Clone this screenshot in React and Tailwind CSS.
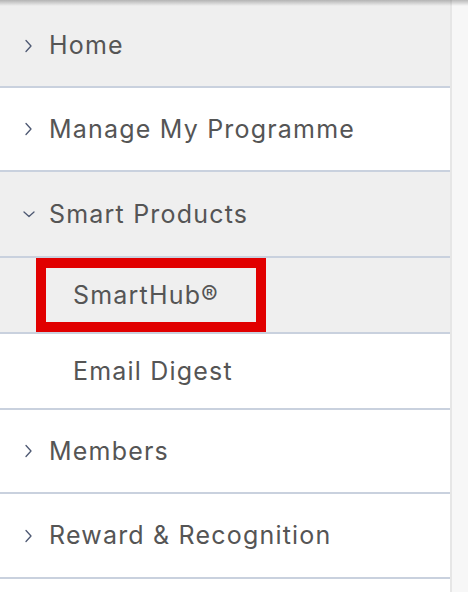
import React from 'react';

const Chevron = ({ open }) => (
  <svg width="14" height="14" viewBox="0 0 14 14" className="shrink-0" fill="none" stroke="#4d5872" strokeWidth="1.3" strokeLinecap="round" strokeLinejoin="round">
    {open ? <path d="M2 5 L7 9.5 L12 5" /> : <path d="M4 1.5 L9 7 L4 12.5" />}
  </svg>
);

const MENU = [
  { label: 'Home', h: 'h-[88px] pt-[5px]', bg: 'bg-[#efefef]', chevron: 'closed' },
  { label: 'Manage My Programme', h: 'h-[84px]', bg: 'bg-white', chevron: 'closed' },
  { label: 'Smart Products', h: 'h-[86px]', bg: 'bg-[#efefef]', chevron: 'open' },
  { label: 'SmartHub®', h: 'h-[76px]', bg: 'bg-[#efefef]', sub: true, highlight: true },
  { label: 'Email Digest', h: 'h-[76px]', bg: 'bg-white', sub: true },
  { label: 'Members', h: 'h-[84px]', bg: 'bg-white', chevron: 'closed' },
  { label: 'Reward & Recognition', h: 'h-[85px]', bg: 'bg-white', chevron: 'closed' },
];

export default function App() {
  return (
    <div className="relative flex w-[468px] h-[592px] overflow-hidden bg-white" style={{ fontFamily: 'Inter, "Liberation Sans", Arial, sans-serif' }}>
      <div className="w-[450px] flex flex-col">
        {MENU.map((item) => (
          <div
            key={item.label}
            className={`relative box-border flex items-center shrink-0 border-b-2 border-[#c9d1de] ${item.h} ${item.bg} ${item.sub ? 'pl-[73px]' : 'pl-[22px]'}`}
          >
            {!item.sub && (
              <span className="w-[27px] flex items-center">
                <Chevron open={item.chevron === 'open'} />
              </span>
            )}
            <span className="text-[25px] tracking-[1.2px] text-[#555555] leading-none">{item.label}</span>
            {item.highlight && (
              <div className="absolute left-[36px] top-0 w-[230px] h-[74px] box-border border-[10px] border-[#e10000]" />
            )}
          </div>
        ))}
        <div className="flex-1 bg-white" />
      </div>
      <div className="flex-1 bg-[#f7f7f7] border-l-2 border-[#e6e6e6]" />
      <div className="absolute top-0 left-0 right-0 h-[6px] bg-gradient-to-b from-black/25 to-transparent pointer-events-none" />
    </div>
  );
}
